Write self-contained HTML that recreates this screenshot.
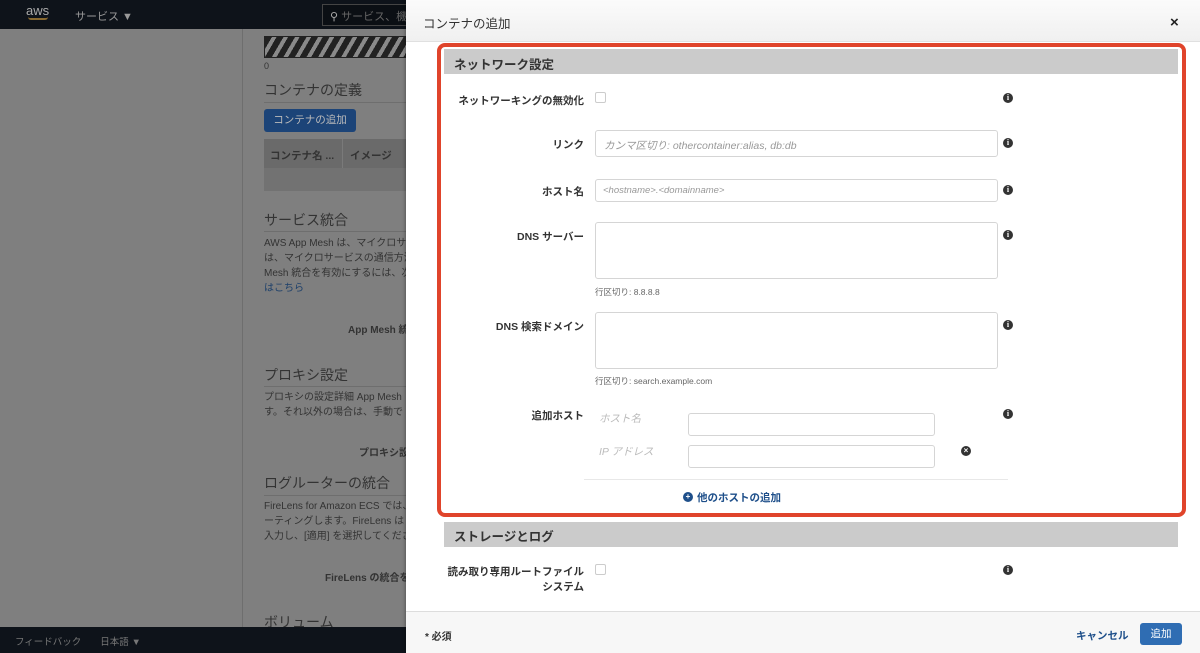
<!DOCTYPE html>
<html><head><meta charset="utf-8"><style>
*{box-sizing:border-box;margin:0;padding:0}
body{width:1200px;height:653px;overflow:hidden;position:relative;background:#7f7f7f;font-family:"Liberation Sans","Noto Sans CJK JP",sans-serif;color:#222}
.a{position:absolute;white-space:nowrap}
.nav{left:0;top:0;width:1200px;height:29px;background:#0e131a}
.bot{left:0;top:627px;width:420px;height:26px;background:#0e131a}
.lbl{font-size:10.5px;font-weight:bold;color:#333;text-align:right;width:150px}
.inp{position:absolute;border:1px solid #d5d5d5;border-radius:3px;background:#fff}
.ph{font-size:10.5px;font-style:italic;color:#999}
.info{position:absolute;width:10px;height:10px;border-radius:50%;background:#333;color:#fff;font-size:8px;font-weight:bold;text-align:center;line-height:10px;font-family:"Liberation Serif",serif}
.hint{font-size:8.5px;color:#666}
.dh{color:#333}
</style></head><body>
<div class="a nav"></div>
<div class="a" style="left:26px;top:3px;color:#aaa;font-size:13px">aws</div>
<div class="a" style="left:28px;top:17px;width:20px;height:3px;border-bottom:2px solid #8a6a30;border-radius:0 0 10px 10px"></div>
<div class="a" style="left:75px;top:8px;color:#999;font-size:11px">サービス ▼</div>
<div class="a" style="left:322px;top:4px;width:90px;height:22px;border:1px solid #444;background:#0b0f14"></div>
<div class="a" style="left:330px;top:8px;color:#aaa;font-size:11px">⚲ <span style="color:#666">サービス、機</span></div>
<div class="a" style="left:242px;top:29px;width:1px;height:598px;background:#6e6e6e"></div>
<div class="a" style="left:264px;top:36px;width:145px;height:22px;border:1px solid #222;background:repeating-linear-gradient(120deg,#222 0 6px,#8a8a8a 6px 10px)"></div>
<div class="a dh" style="left:264px;top:61px;font-size:9px">0</div>
<div class="a dh" style="left:264px;top:80px;font-size:14px">コンテナの定義</div>
<div class="a" style="left:264px;top:102px;width:145px;height:1px;background:#6e6e6e"></div>
<div class="a" style="left:264px;top:109px;width:92px;height:23px;background:#1c4478;border-radius:3px;color:#bbb;font-size:10.5px;text-align:center;line-height:23px">コンテナの追加</div>
<div class="a" style="left:264px;top:139px;width:145px;height:52px;background:#727272"></div>
<div class="a" style="left:264px;top:139px;width:145px;height:29px;background:#6a6a6a"></div>
<div class="a" style="left:342px;top:139px;width:1px;height:29px;background:#7a7a7a"></div>
<div class="a dh" style="left:270px;top:148px;font-size:10.5px;font-weight:bold">コンテナ名 ...</div>
<div class="a dh" style="left:350px;top:148px;font-size:10.5px;font-weight:bold">イメージ</div>
<div class="a dh" style="left:264px;top:210px;font-size:14px">サービス統合</div>
<div class="a" style="left:264px;top:231px;width:145px;height:1px;background:#6e6e6e"></div>
<div class="a dh" style="left:264px;top:236px;font-size:10px;line-height:15px">AWS App Mesh は、マイクロサ<br>は、マイクロサービスの通信方法<br>Mesh 統合を有効にするには、次<br><span style="color:#1c3f6a">はこちら</span></div>
<div class="a dh" style="left:348px;top:321px;font-size:10px;font-weight:bold">App Mesh 統</div>
<div class="a dh" style="left:264px;top:365px;font-size:14px">プロキシ設定</div>
<div class="a" style="left:264px;top:386px;width:145px;height:1px;background:#6e6e6e"></div>
<div class="a dh" style="left:264px;top:390px;font-size:10px;line-height:15px">プロキシの設定詳細 App Mesh<br>す。それ以外の場合は、手動で</div>
<div class="a dh" style="left:359px;top:444px;font-size:10px;font-weight:bold">プロキシ設</div>
<div class="a dh" style="left:264px;top:473px;font-size:14px">ログルーターの統合</div>
<div class="a" style="left:264px;top:495px;width:145px;height:1px;background:#6e6e6e"></div>
<div class="a dh" style="left:264px;top:499px;font-size:10px;line-height:15px">FireLens for Amazon ECS では、<br>ーティングします。FireLens は<br>入力し、[適用] を選択してくださ</div>
<div class="a dh" style="left:325px;top:569px;font-size:10px;font-weight:bold">FireLens の統合を</div>
<div class="a dh" style="left:264px;top:612px;font-size:14px">ボリューム</div>
<div class="a bot"></div>
<div class="a" style="left:15px;top:634px;color:#777;font-size:9.5px">フィードバック　　日本語 ▼</div>

<div class="a" style="left:406px;top:0;width:794px;height:653px;background:#fff;box-shadow:-1px 0 3px rgba(0,0,0,.3)"></div>
<div class="a" style="left:406px;top:0;width:794px;height:42px;background:linear-gradient(#fbfbfb,#f0f0f0);border-bottom:1px solid #e0e0e0"></div>
<div class="a" style="left:423px;top:13px;font-size:12.5px;color:#333">コンテナの追加</div>
<div class="a" style="left:1170px;top:14px;font-size:15px;font-weight:bold;color:#222">×</div>

<div class="a" style="left:437px;top:43px;width:749px;height:474px;border:4px solid #e0442b;border-radius:8px"></div>
<div class="a" style="left:444px;top:49px;width:734px;height:25px;background:#cbcbcb"></div>
<div class="a" style="left:454px;top:54px;font-size:12.5px;font-weight:bold;color:#333">ネットワーク設定</div>

<div class="a lbl" style="left:434px;top:93px">ネットワーキングの無効化</div>
<div class="a" style="left:595px;top:92px;width:11px;height:11px;border:1px solid #ccc;border-radius:2px"></div>
<div class="info" style="left:1003px;top:93px">i</div>

<div class="a lbl" style="left:434px;top:137px">リンク</div>
<div class="inp" style="left:595px;top:130px;width:403px;height:27px"></div>
<div class="a ph" style="left:604px;top:138px">カンマ区切り: othercontainer:alias, db:db</div>
<div class="info" style="left:1003px;top:138px">i</div>

<div class="a lbl" style="left:434px;top:184px">ホスト名</div>
<div class="inp" style="left:595px;top:179px;width:403px;height:23px"></div>
<div class="a ph" style="left:603px;top:185px;font-size:9.5px">&lt;hostname&gt;.&lt;domainname&gt;</div>
<div class="info" style="left:1003px;top:185px">i</div>

<div class="a lbl" style="left:434px;top:229px">DNS サーバー</div>
<div class="inp" style="left:595px;top:222px;width:403px;height:57px"></div>
<div class="a hint" style="left:595px;top:286px">行区切り: 8.8.8.8</div>
<div class="info" style="left:1003px;top:230px">i</div>

<div class="a lbl" style="left:434px;top:319px">DNS 検索ドメイン</div>
<div class="inp" style="left:595px;top:312px;width:403px;height:57px"></div>
<div class="a hint" style="left:595px;top:375px">行区切り: search.example.com</div>
<div class="info" style="left:1003px;top:320px">i</div>

<div class="a lbl" style="left:434px;top:408px">追加ホスト</div>
<div class="a ph" style="left:599px;top:411px;color:#bbb">ホスト名</div>
<div class="a ph" style="left:599px;top:444px;color:#bbb">IP アドレス</div>
<div class="inp" style="left:688px;top:413px;width:247px;height:23px"></div>
<div class="inp" style="left:688px;top:445px;width:247px;height:23px"></div>
<div class="info" style="left:1003px;top:409px">i</div>
<div class="info" style="left:961px;top:446px;font-family:'Liberation Sans',sans-serif">×</div>
<div class="a" style="left:584px;top:479px;width:424px;height:1px;background:#e8e8e8"></div>
<div class="info" style="left:683px;top:492px;background:#1e4f8a;font-family:'Liberation Sans',sans-serif">+</div>
<div class="a" style="left:697px;top:490px;font-size:10.5px;font-weight:bold;color:#1e4f8a">他のホストの追加</div>

<div class="a" style="left:444px;top:522px;width:734px;height:25px;background:#cbcbcb"></div>
<div class="a" style="left:454px;top:526px;font-size:12.5px;font-weight:bold;color:#333">ストレージとログ</div>
<div class="a lbl" style="left:434px;top:565px;line-height:15px">読み取り専用ルートファイル<br>システム</div>
<div class="a" style="left:595px;top:564px;width:11px;height:11px;border:1px solid #ccc;border-radius:2px"></div>
<div class="info" style="left:1003px;top:565px">i</div>

<div class="a" style="left:406px;top:611px;width:794px;height:42px;background:#f7f7f7;border-top:1px solid #ddd"></div>
<div class="a" style="left:425px;top:628px;font-size:10px;font-weight:bold;color:#333">* 必須</div>
<div class="a" style="left:1076px;top:628px;font-size:10.5px;font-weight:bold;color:#1e4f8a">キャンセル</div>
<div class="a" style="left:1140px;top:623px;width:42px;height:22px;background:#2f6db3;border-radius:3px;color:#fff;font-size:10.5px;text-align:center;line-height:22px">追加</div>
</body></html>
